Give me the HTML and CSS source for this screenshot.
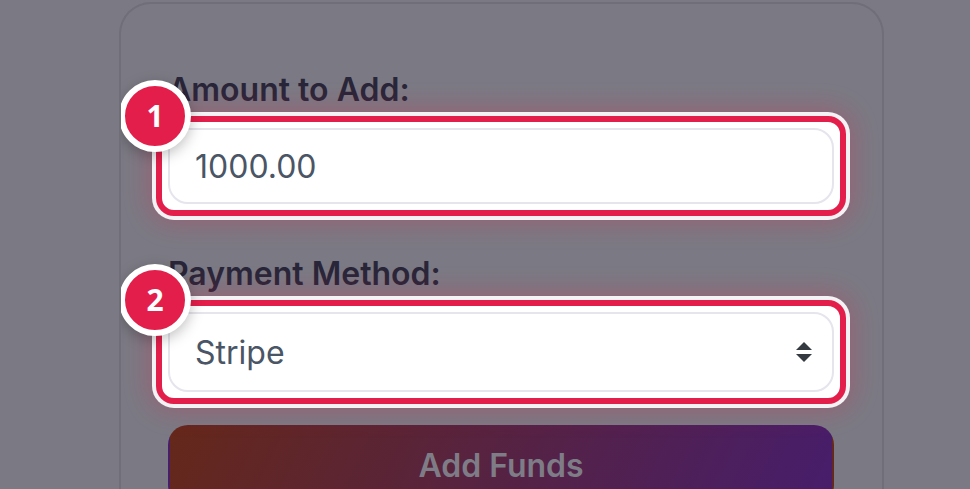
FILE: index.html
```html
<!DOCTYPE html>
<html lang="en">
<head>
    <meta charset="UTF-8">
    <meta name="viewport" content="width=device-width, initial-scale=1.0">
    <title>Add Funds</title>
    <link rel="stylesheet" href="styles.css">
</head>
<body>
    <form class="card">
        <div class="field">
            <label class="field-label" for="amount">Amount to Add:</label>
            <div class="spot">
                <span class="badge">1</span>
                <input class="control" id="amount" type="text" value="1000.00">
            </div>
        </div>
        <div class="field">
            <label class="field-label" for="method">Payment Method:</label>
            <div class="spot">
                <span class="badge">2</span>
                <select class="control control-select" id="method">
                    <option>Stripe</option>
                </select>
                <svg class="select-arrows" width="16" height="20" viewBox="0 0 16 20">
                    <path d="M8 0 L16 8 H0 Z M0 12 H16 L8 20 Z" fill="#343a40"/>
                </svg>
            </div>
        </div>
        <button class="submit-btn" type="button">Add Funds</button>
    </form>
</body>
</html>
```

FILE: styles.css
```css
* {
    margin: 0;
    padding: 0;
    box-sizing: border-box;
}
html, body {
    height: 489px;
    overflow: hidden;
}
body {
    font-family: Inter, Arial, sans-serif;
    background-color: #7b7a84;
    padding: 2px 86px 0 119px;
}
.card {
    height: 487px;
    overflow: hidden;
    border: 2px solid #6f6e79;
    border-bottom: 0;
    border-radius: 32px 32px 0 0;
    padding: 68px 48px 0 47px;
}
.field {
    margin-bottom: 52px;
}
.field-label {
    display: block;
    height: 40px;
    line-height: 36px;
    margin-bottom: 16px;
    font-size: 32px;
    font-weight: 600;
    color: #292639;
}
.spot {
    position: relative;
    margin: -12px;
    padding: 6px;
    border: 6px solid #e31e4b;
    border-radius: 18px;
    background-color: #fff;
    box-shadow: 0 0 0 4px #f4f2f4, 0 0 24px 8px rgba(227, 30, 75, 0.25);
}
.badge {
    position: absolute;
    left: -43px;
    top: -42px;
    width: 72px;
    height: 72px;
    border: 6px solid #fff;
    border-radius: 50%;
    background-color: #e31e4b;
    color: #fff;
    font-family: "Open Sans", sans-serif;
    font-size: 30px;
    font-weight: 700;
    line-height: 60px;
    text-align: center;
    box-shadow: 0 4px 14px rgba(0, 0, 0, 0.25);
}
.control {
    display: block;
    width: 100%;
    height: 76px;
    padding: 0 25px;
    border: 2px solid #e6e4ec;
    border-radius: 20px;
    background-color: #fff;
    font-family: Inter, Arial, sans-serif;
    font-size: 32px;
    color: #4a5565;
    outline: none;
}
.control-select {
    height: 80px;
    appearance: none;
}
.select-arrows {
    position: absolute;
    right: 28px;
    top: 36px;
}
.submit-btn {
    display: block;
    width: 100%;
    height: 80px;
    margin-top: -31px;
    border: 2px solid transparent;
    border-radius: 20px;
    background-image: linear-gradient(115deg, #65281a, #471d6c);
    font-family: Inter, Arial, sans-serif;
    font-size: 32px;
    font-weight: 600;
    color: #7e7d87;
}
```
